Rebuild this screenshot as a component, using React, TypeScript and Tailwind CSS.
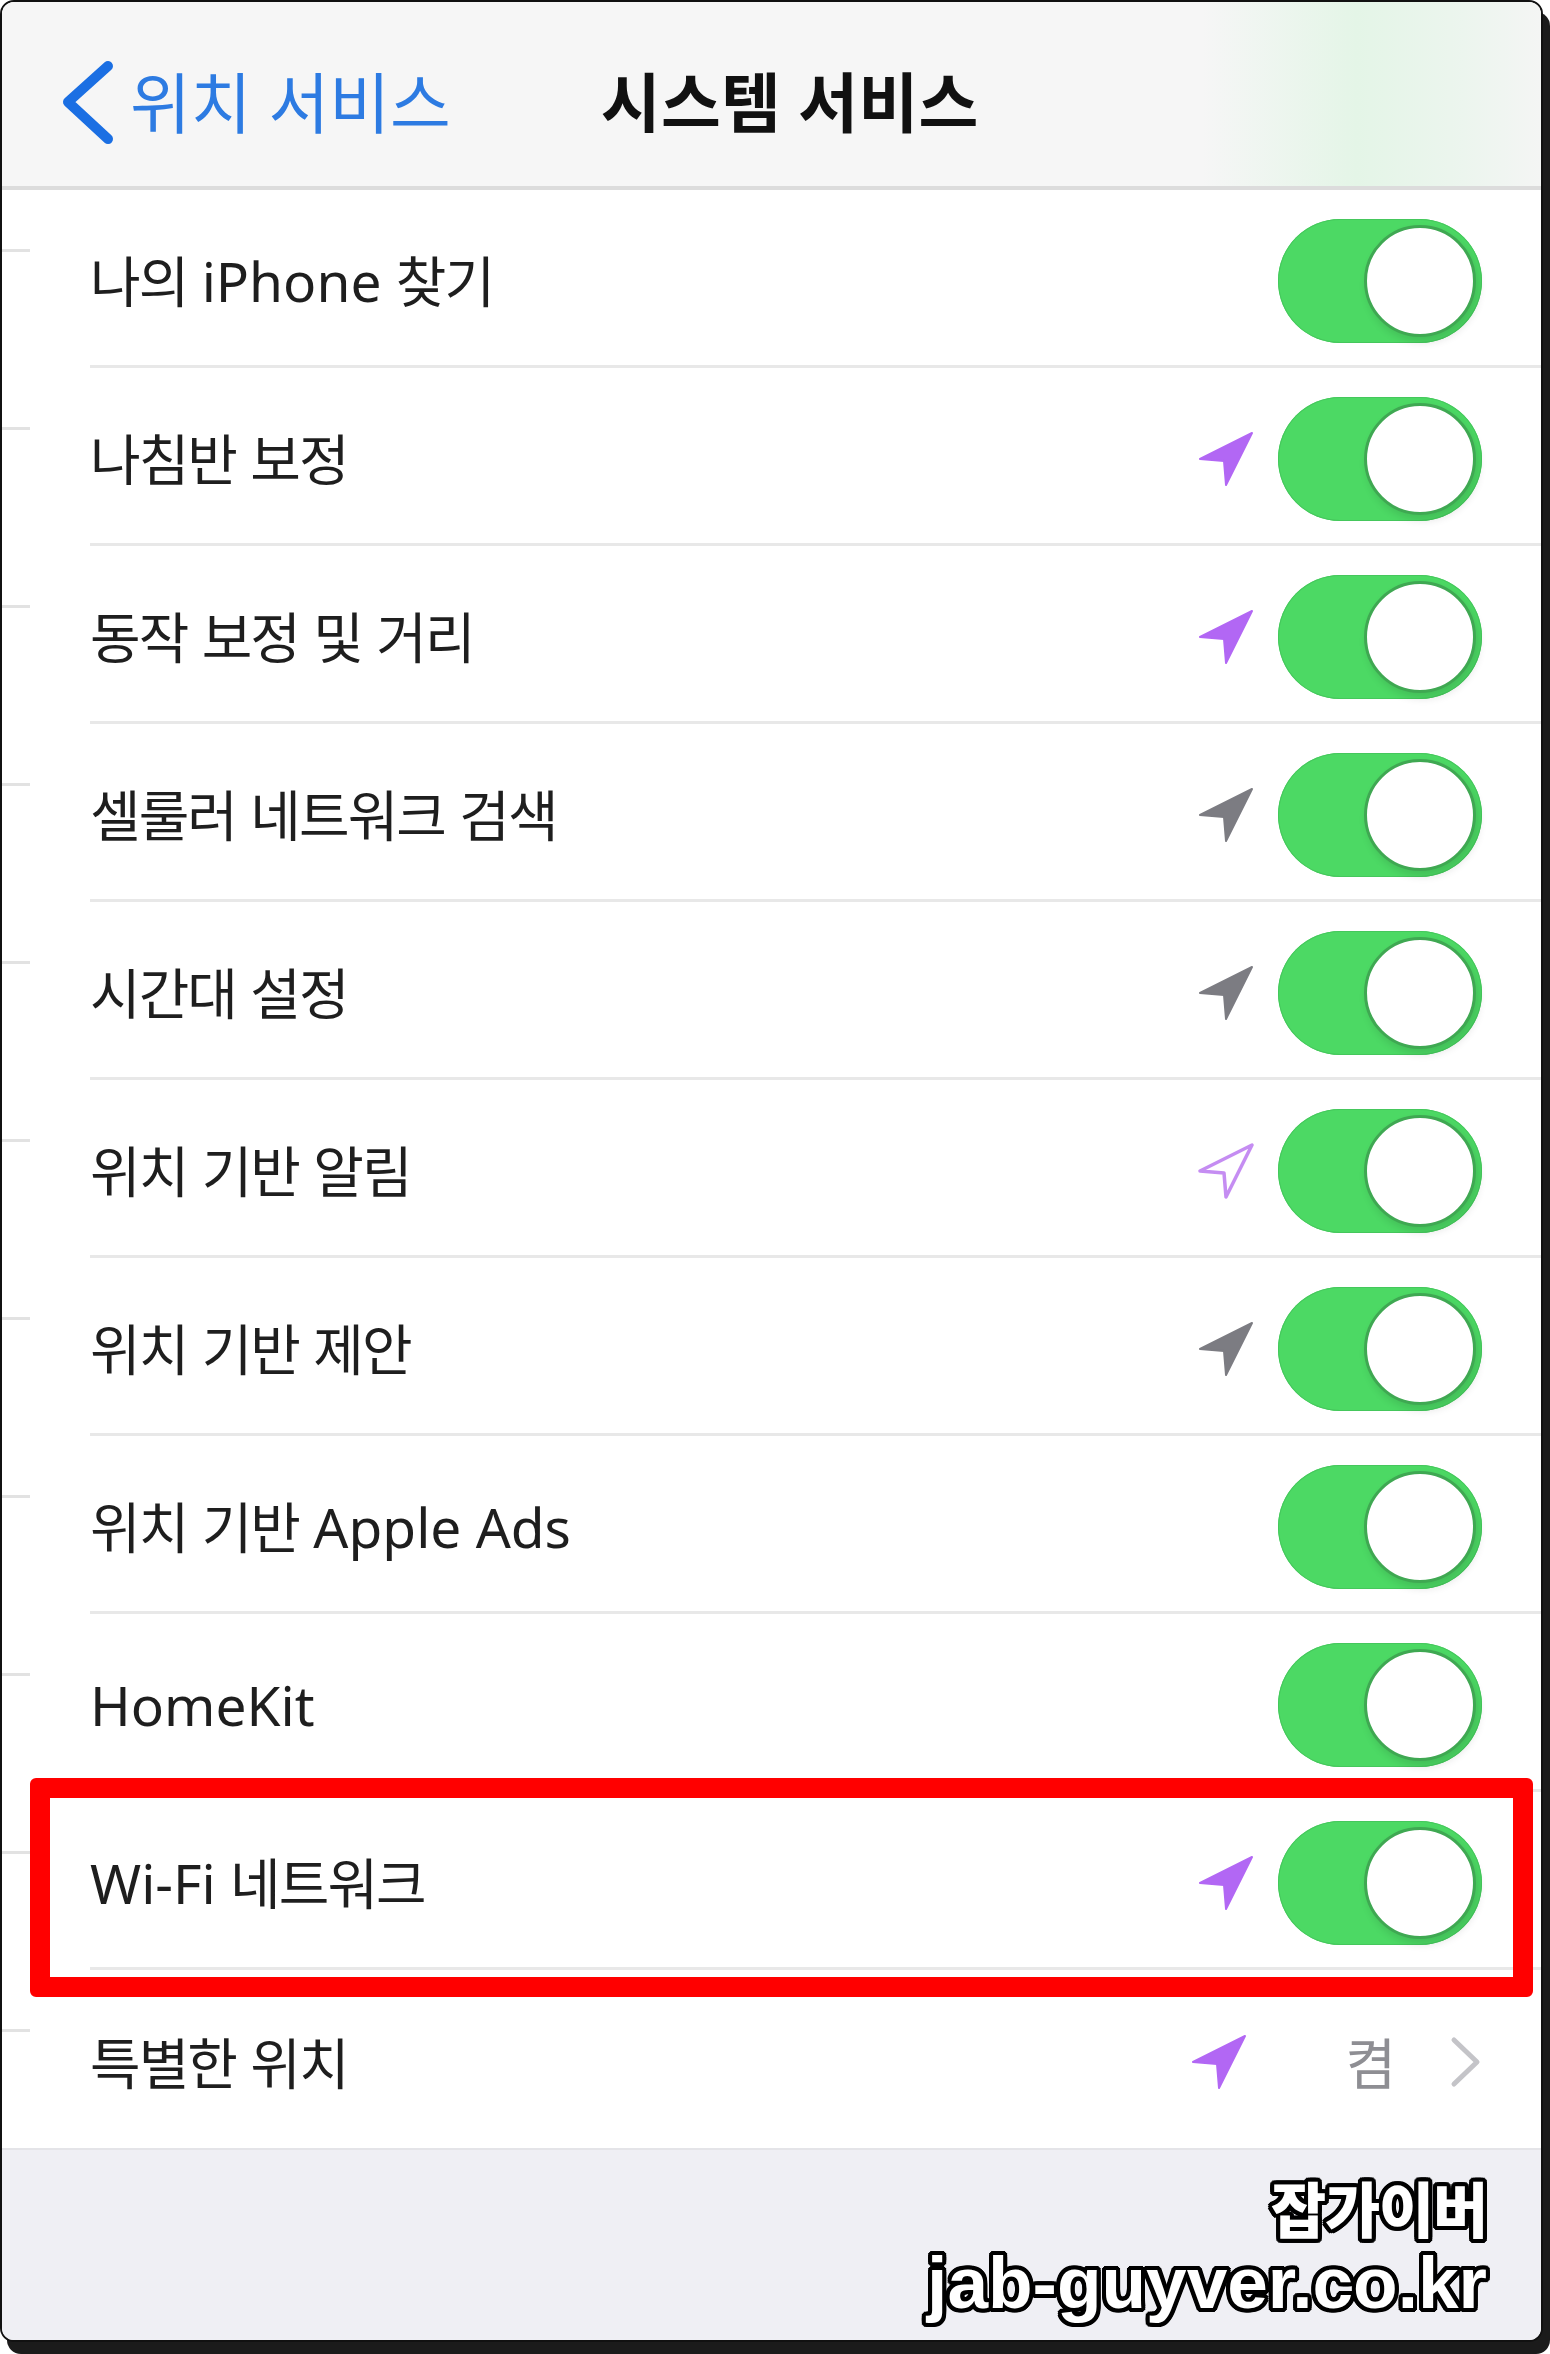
import React from "react";

type Row = {
  label: string;
  arrow?: "purple" | "gray" | "outline";
  toggle?: boolean;
  value?: string;
  boxed?: boolean;
};

const rows: Row[] = [
  { label: "나의 iPhone 찾기", toggle: true },
  { label: "나침반 보정", arrow: "purple", toggle: true },
  { label: "동작 보정 및 거리", arrow: "purple", toggle: true },
  { label: "셀룰러 네트워크 검색", arrow: "gray", toggle: true },
  { label: "시간대 설정", arrow: "gray", toggle: true },
  { label: "위치 기반 알림", arrow: "outline", toggle: true },
  { label: "위치 기반 제안", arrow: "gray", toggle: true },
  { label: "위치 기반 Apple Ads", toggle: true },
  { label: "HomeKit", toggle: true },
  { label: "Wi-Fi 네트워크", arrow: "purple", toggle: true, boxed: true },
  { label: "특별한 위치", arrow: "purple", value: "켬" },
];

// hangul runs get slightly tighter tracking, latin stays as is
const Ko = ({ text }: { text: string }) => (
  <>
    {text.split(/([가-힣]+)/).map((p, i) =>
      /[가-힣]/.test(p) ? (
        <span key={i} className="tracking-[-0.035em]">
          {p}
        </span>
      ) : (
        <span key={i}>{p}</span>
      )
    )}
  </>
);

const Arrow = ({ kind }: { kind: "purple" | "gray" | "outline" }) => {
  const color = kind === "gray" ? "#7c7c82" : kind === "outline" ? "#c58df2" : "#b267f4";
  return (
    <svg width="56" height="56" viewBox="0 0 56 56" className="mr-[24px] shrink-0">
      <polygon
        points="2,28 54,2 28,54 26,30"
        fill={kind === "outline" ? "none" : color}
        stroke={color}
        strokeWidth={kind === "outline" ? 3.5 : 2}
        strokeLinejoin="round"
      />
    </svg>
  );
};

const Toggle = () => (
  <div className="flex h-[124px] w-[204px] shrink-0 items-center justify-end rounded-full bg-[#4cd964] pr-[6px] shadow-[inset_0_0_0_1px_#45c75c]">
    <div className="h-[112px] w-[112px] rounded-full border-[3px] border-[#3fa852] bg-white shadow-[3px_5px_8px_rgba(0,0,0,0.12)]" />
  </div>
);

const outline =
  "[text-shadow:4px_0_0_#000,-4px_0_0_#000,0_4px_0_#000,0_-4px_0_#000,3px_3px_0_#000,-3px_3px_0_#000,3px_-3px_0_#000,-3px_-3px_0_#000,4px_2px_0_#000,-4px_2px_0_#000,4px_-2px_0_#000,-4px_-2px_0_#000,2px_4px_0_#000,-2px_4px_0_#000,2px_-4px_0_#000,-2px_-4px_0_#000]";

export default function App() {
  return (
    <div className="h-[2354px] w-[1550px] bg-white font-['Noto_Sans','Noto_Sans_CJK_KR',sans-serif]">
      <div className="relative flex h-[2342px] w-[1543px] flex-col overflow-hidden rounded-[14px] border-2 border-[#111] bg-white shadow-[7px_12px_0_#1b1b1b]">
        {/* nav bar */}
        <div className="flex h-[188px] shrink-0 items-center border-b-4 border-[#dcdcdc] bg-[linear-gradient(90deg,#f6f6f6_0%,#f6f6f6_78%,#e4f5e7_88%,#ecf5ee_95%,#f4f5f4_100%)] pt-[16px]">
          <svg width="60" height="95" viewBox="0 0 60 95" className="ml-[56px] shrink-0">
            <polyline
              points="50,11 10,47 50,84"
              fill="none"
              stroke="#1b6fe3"
              strokeWidth="10"
              strokeLinecap="round"
              strokeLinejoin="round"
            />
          </svg>
          <span className="ml-[12px] text-[66px] leading-none text-[#2d7be2]">위치 서비스</span>
          <span className="ml-[150px] text-[65px] font-bold leading-none tracking-[0.005em] text-[#111]">
            시스템 서비스
          </span>
        </div>

        {/* list */}
        {rows.map((r, i) => (
          <div key={i} className="relative flex h-[178px] shrink-0">
            <div className="w-[88px] shrink-0">
              <div className="mt-[59px] h-[3px] w-[28px] bg-[#e2e2e2]" />
            </div>
            <div
              className={
                i === rows.length - 1
                  ? "flex flex-1 items-center pr-[59px] pt-[6px]"
                  : "flex flex-1 items-center border-b-[3px] border-[#e8e8e8] pr-[59px] pt-[6px]"
              }
            >
              <span className="text-[55px] leading-none text-[#1e1e1e]">
                <Ko text={r.label} />
              </span>
              <div className="ml-auto flex items-center">
                {r.arrow && <Arrow kind={r.arrow} />}
                {r.toggle && <Toggle />}
                {r.value && (
                  <>
                    <span className="ml-[74px] text-[55px] leading-none text-[#8e8e93]">{r.value}</span>
                    <svg width="34" height="56" viewBox="0 0 34 56" className="ml-[52px]">
                      <polyline
                        points="6,6 29,28 6,50"
                        fill="none"
                        stroke="#c4c4c8"
                        strokeWidth="5"
                        strokeLinecap="round"
                        strokeLinejoin="round"
                      />
                    </svg>
                  </>
                )}
              </div>
            </div>
            {r.boxed && (
              <div className="absolute left-[28px] top-[-14px] h-[219px] w-[1503px] rounded-[6px] border-[20px] border-[#ff0000]" />
            )}
          </div>
        ))}

        {/* footer with watermark */}
        <div className="flex flex-1 flex-col items-end border-t-2 border-[#e4e4e8] bg-[#efeff4] pr-[54px] pt-[30px]">
          <span className={`text-[60px] font-black leading-none tracking-[-0.02em] text-white ${outline}`}>
            잡가이버
          </span>
          <span
            className={`mt-[6px] font-['Liberation_Sans',sans-serif] text-[73px] font-bold leading-none text-white ${outline}`}
          >
            jab-guyver.co.kr
          </span>
        </div>
      </div>
    </div>
  );
}
